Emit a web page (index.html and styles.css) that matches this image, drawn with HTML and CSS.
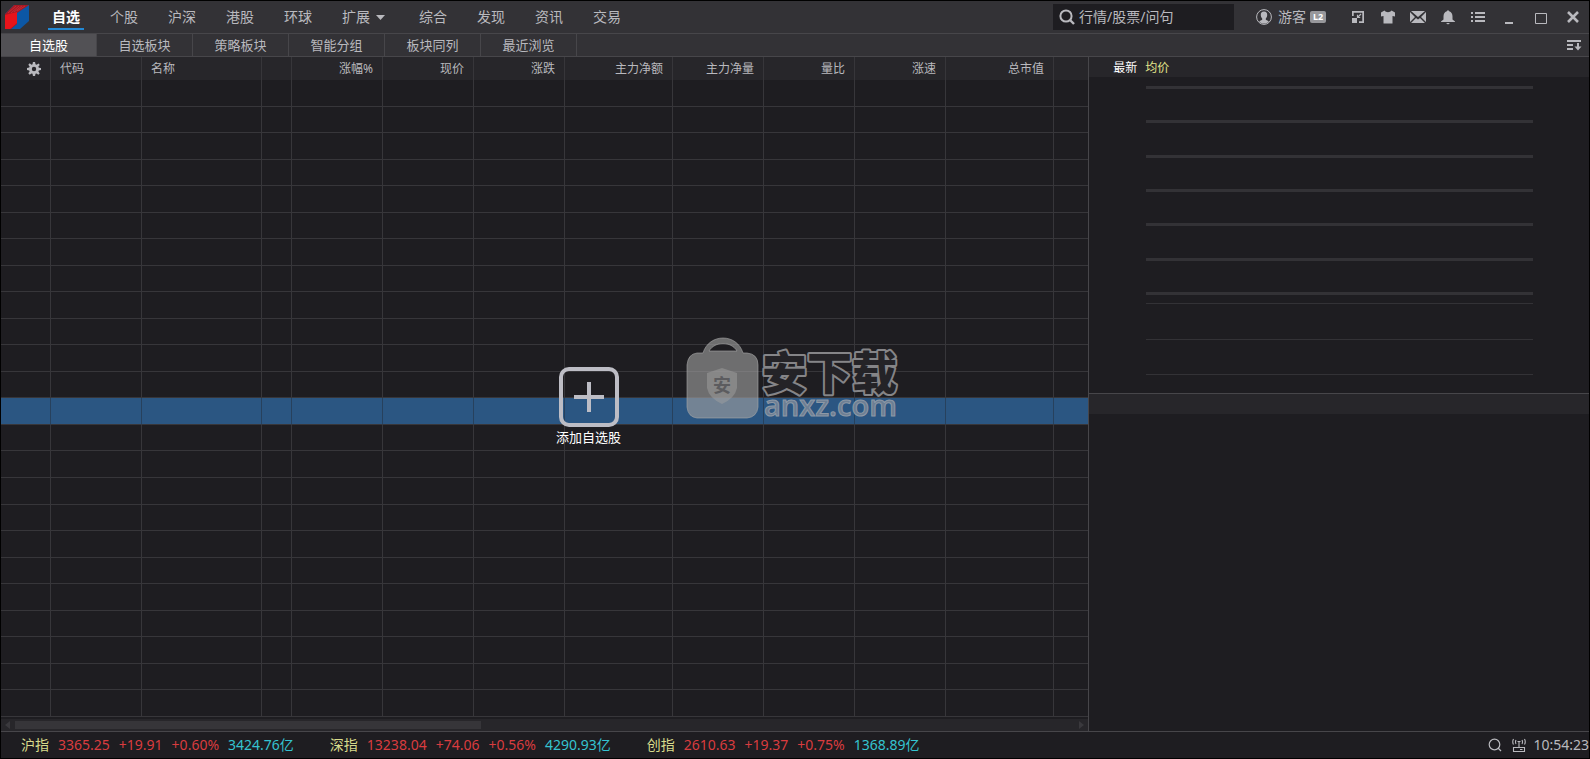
FILE: index.html
```html
<!DOCTYPE html>
<html lang="zh-CN">
<head>
<meta charset="utf-8">
<title>自选股</title>
<link rel="stylesheet" href="styles.css">
</head>
<body>
<div class="app">
  <header class="titlebar">
    <svg class="logo" viewBox="0 0 24 24" aria-hidden="true">
      <path d="M0 9 9 0H24V16L15 24H0Z" fill="#0c57a5"/>
      <path d="M0 9 9 0H24L12 8V19L6 24H0Z" fill="#a81822"/>
      <path d="M0 10 12 7V18L5 24H0Z" fill="#e8131b"/>
      <path d="M3 8 11 1M6 8 14 1M9 7 17 1M12 6 20 1" stroke="#c42b35" stroke-width="1"/>
    </svg>
    <nav class="menu">
      <button class="menu-item active">自选</button>
      <button class="menu-item">个股</button>
      <button class="menu-item">沪深</button>
      <button class="menu-item">港股</button>
      <button class="menu-item">环球</button>
      <button class="menu-item more">扩展<svg class="caret" viewBox="0 0 9 5"><path d="M0 0H9L4.5 5Z"/></svg></button>
      <button class="menu-item">综合</button>
      <button class="menu-item">发现</button>
      <button class="menu-item">资讯</button>
      <button class="menu-item">交易</button>
    </nav>
    <label class="search">
      <svg class="i16 line" viewBox="0 0 16 16"><circle cx="7" cy="7" r="5.6" stroke-width="2"/><path d="M11 11 15 15" stroke-width="2.4"/></svg>
      <input type="text" class="search-input" placeholder="行情/股票/问句" aria-label="行情/股票/问句">
    </label>
    <button class="user">
      <svg class="i16" viewBox="0 0 16 16"><circle cx="8" cy="8" r="7.4" fill="none" stroke="#b9b9be"/><path d="M8 2.500c2.300 0 3.300 1.500 3.200 3.500 0 1.600-.6 2.700-1.400 3.500v1.200l3 1.500C11.500 14 10 14.600 8 14.600S4.500 14 3.200 12.200l3-1.500V9.500C5.400 8.700 4.800 7.600 4.800 6 4.700 4 5.700 2.500 8 2.500Z"/></svg>
      <span>游客</span><span class="badge">L2</span>
    </button>
    <div class="tools">
      <button class="tool" aria-label="缩放"><svg class="i16" viewBox="0 0 16 16"><path d="M2 2H14V14H9V12.300H12.300V3.700H3.700V7H2ZM2 9H7V14H2Z"/><path d="M11 5 7.500 8.500M7.500 5.800V8.500H10.200" fill="none" stroke="#b9b9be" stroke-width="1.200"/></svg></button>
      <button class="tool" aria-label="皮肤"><svg class="i16" viewBox="0 0 16 16"><path d="M1 3.500 4.500 1.500C6 3.800 10 3.800 11.500 1.500L15 3.500V7.500L12.500 7V14.500H3.500V7L1 7.500Z"/></svg></button>
      <button class="tool" aria-label="邮件"><svg class="i16" viewBox="0 0 16 12"><path d="M1 0H15L8 6ZM0 1 5 6 0 11ZM16 1 11 6 16 11ZM1 12 6 7 8 8.500 10 7 15 12Z"/></svg></button>
      <button class="tool" aria-label="提醒"><svg class="i16" viewBox="0 0 16 16"><path d="M8 1 9.200 2.200C11.500 3 12.500 5 12.500 7.500V10.500L15 12.500V13H1V12.500L3.500 10.500V7.500C3.500 5 4.500 3 6.800 2.200ZM6 14H10L8 15.500Z"/></svg></button>
      <button class="tool" aria-label="菜单"><svg class="i16" viewBox="0 0 16 16"><path d="M1 3H3V5H1ZM5 3H15V5H5ZM1 7H3V9H1ZM5 7H15V9H5ZM1 11H3V13H1ZM5 11H15V13H5Z"/></svg></button>
      <button class="tool win" aria-label="最小化"><svg class="i16" viewBox="0 0 16 16"><path d="M4 13H12V15H4Z"/></svg></button>
      <button class="tool win" aria-label="最大化"><svg class="i16 line" viewBox="0 0 16 16"><path d="M2.500 4.500H13.500V14.500H2.500Z" stroke-width="1"/></svg></button>
      <button class="tool win" aria-label="关闭"><svg class="i16 line" viewBox="0 0 16 16"><path d="M3 3 13 13M13 3 3 13" stroke-width="2.600"/></svg></button>
    </div>
  </header>

  <nav class="subtabs">
    <button class="subtab active">自选股</button>
    <button class="subtab">自选板块</button>
    <button class="subtab">策略板块</button>
    <button class="subtab">智能分组</button>
    <button class="subtab">板块同列</button>
    <button class="subtab">最近浏览</button>
    <button class="sort" aria-label="排序"><svg class="i16" viewBox="0 0 16 16"><path d="M1 3H15V5H1ZM1 7H7V9H1ZM1 11H7V13H1ZM11 6H13V9.500H15.500L12 13.500 8.500 9.500H11Z"/></svg></button>
  </nav>

  <main class="main">
    <section class="list">
      <div class="grid-wrap">
        <table class="grid">
          <colgroup><col class="c-set"><col class="c-std"><col class="c-name"><col class="c-flag"><col class="c-std"><col class="c-std"><col class="c-std"><col class="c-wide"><col class="c-std"><col class="c-std"><col class="c-std"><col class="c-wide"><col></colgroup>
          <thead><tr>
            <th class="set"><button class="gear" aria-label="设置"><svg class="i14" viewBox="0 0 16 16"><path d="M6.800 0H9.200L9.700 2.500 11 3.100 13.200 1.700 14.600 3.300 13 5.200 13.500 6.600 16 6.900V9.200L13.500 9.700 13 10.900 14.500 13 12.900 14.500 10.900 13 9.700 13.500 9.200 16H6.800L6.300 13.500 5.100 13 3.100 14.500 1.500 12.900 3 10.900 2.500 9.700 0 9.200V6.800L2.500 6.300 3 5.100 1.500 3.100 3.100 1.500 5.100 3 6.300 2.500ZM8 5.500A2.500 2.500 0 1 0 8 10.500 2.500 2.500 0 1 0 8 5.500Z" fill-rule="evenodd"/></svg></button></th>
            <th class="left">代码</th><th class="left">名称</th><th></th><th>涨幅%</th><th>现价</th><th>涨跌</th><th>主力净额</th><th>主力净量</th><th>量比</th><th>涨速</th><th>总市值</th><th></th>
          </tr></thead>
          <tbody>
            <tr><td><td><td><td><td><td><td><td><td><td><td><td><td>
            <tr><td><td><td><td><td><td><td><td><td><td><td><td><td>
            <tr><td><td><td><td><td><td><td><td><td><td><td><td><td>
            <tr><td><td><td><td><td><td><td><td><td><td><td><td><td>
            <tr><td><td><td><td><td><td><td><td><td><td><td><td><td>
            <tr><td><td><td><td><td><td><td><td><td><td><td><td><td>
            <tr><td><td><td><td><td><td><td><td><td><td><td><td><td>
            <tr><td><td><td><td><td><td><td><td><td><td><td><td><td>
            <tr><td><td><td><td><td><td><td><td><td><td><td><td><td>
            <tr><td><td><td><td><td><td><td><td><td><td><td><td><td>
            <tr><td><td><td><td><td><td><td><td><td><td><td><td><td>
            <tr><td><td><td><td><td><td><td><td><td><td><td><td><td>
            <tr class="selected"><td><td><td><td><td><td><td><td><td><td><td><td><td>
            <tr><td><td><td><td><td><td><td><td><td><td><td><td><td>
            <tr><td><td><td><td><td><td><td><td><td><td><td><td><td>
            <tr><td><td><td><td><td><td><td><td><td><td><td><td><td>
            <tr><td><td><td><td><td><td><td><td><td><td><td><td><td>
            <tr><td><td><td><td><td><td><td><td><td><td><td><td><td>
            <tr><td><td><td><td><td><td><td><td><td><td><td><td><td>
            <tr><td><td><td><td><td><td><td><td><td><td><td><td><td>
            <tr><td><td><td><td><td><td><td><td><td><td><td><td><td>
            <tr><td><td><td><td><td><td><td><td><td><td><td><td><td>
            <tr><td><td><td><td><td><td><td><td><td><td><td><td><td>
            <tr><td><td><td><td><td><td><td><td><td><td><td><td><td>
          </tbody>
        </table>
        <button class="add">
          <svg class="add-icon" viewBox="0 0 60 60"><rect x="2" y="2" width="56" height="56" rx="8" stroke-width="4"/><path d="M15 30H45M30 15V45" stroke-width="4"/></svg>
          <span>添加自选股</span>
        </button>
        <svg class="watermark" viewBox="0 0 230 90">
          <path d="M18 16C24 -4 52 -4 58 16H62Q73 17 73 28V70Q72 80 62 81H12Q3 80 2 70V28Q3 17 12 16ZM24 14H52C46 4 30 4 24 14Z" fill="#a0a0a0" fill-opacity=".62" fill-rule="evenodd" stroke="#a8a8a8" stroke-opacity=".6"/>
          <path d="M37 31 52 36V51Q50 61 37 67 24 61 22 51V36Z" fill="#a0a0a0" fill-opacity=".5"/>
          <text x="37" y="55" class="wm-mini" text-anchor="middle">安</text>
          <text x="77" y="53" class="wm-cn">安下载</text>
          <text x="79" y="79" class="wm-en">anxz.com</text>
        </svg>
      </div>
      <div class="scroll">
        <svg class="arrow" viewBox="0 0 5 8"><path d="M5 0V8L0 4Z"/></svg>
        <div class="track"><div class="thumb"></div></div>
        <svg class="arrow" viewBox="0 0 5 8"><path d="M0 0V8L5 4Z"/></svg>
      </div>
    </section>

    <aside class="side">
      <div class="side-head"><span class="latest">最新</span><span class="avg">均价</span></div>
      <div class="chart">
        <div class="bars"><i></i><i></i><i></i><i></i><i></i><i></i><i></i></div>
        <div class="lines"><i></i><i></i><i></i></div>
      </div>
      <div class="side-bar"></div>
    </aside>
  </main>

  <footer class="status">
    <div class="index"><span class="name">沪指</span><span class="up">3365.25</span><span class="up">+19.91</span><span class="up">+0.60%</span><span class="vol">3424.76亿</span></div>
    <div class="index"><span class="name">深指</span><span class="up">13238.04</span><span class="up">+74.06</span><span class="up">+0.56%</span><span class="vol">4290.93亿</span></div>
    <div class="index"><span class="name">创指</span><span class="up">2610.63</span><span class="up">+19.37</span><span class="up">+0.75%</span><span class="vol">1368.89亿</span></div>
    <div class="status-right">
      <svg class="i14 line" viewBox="0 0 14 14"><circle cx="6.500" cy="6.500" r="5.300" stroke-width="1.200"/><path d="M10 10 13 13" stroke-width="1.200"/></svg>
      <svg class="i14 line" viewBox="0 0 14 14"><path d="M1.500 9.500H12.500V13.500H1.500ZM8 11.500H10.500M7 3V9M5.500 3.500H8.500M4 2Q3 4 4 6M10 2Q11 4 10 6M1.500 1Q0 4 1.500 6.500M12.500 1Q14 4 12.500 6.500" stroke-width="1.100"/></svg>
      <time>10:54:23</time>
    </div>
  </footer>
</div>
</body>
</html>
```

FILE: styles.css
```css
* { box-sizing: border-box; }

body {
  margin: 0;
  background: #1e1d21;
  color: #b9b9be;
  font: 14px/20px "Noto Sans", "Noto Sans CJK SC", sans-serif;
}

button {
  display: flex;
  align-items: center;
  justify-content: center;
  padding: 0;
  border: 0;
  background: none;
  color: inherit;
  font: inherit;
}

svg { display: block; flex: none; fill: #b9b9be; }
.line { fill: none; stroke: #b9b9be; }
.i16 { width: 16px; height: 16px; }
.i14 { width: 14px; height: 14px; }

.app {
  display: flex;
  flex-direction: column;
  height: 100vh;
  border: 1px solid #000;
}

/* Title bar */
.titlebar {
  display: flex;
  align-items: center;
  height: 33px;
  flex: none;
  background: #333236;
  border-bottom: 1px solid #47464a;
}
.logo { width: 24px; height: 24px; margin-left: 4px; }
.menu { display: flex; align-self: stretch; gap: 22px; margin-left: 19px; }
.menu-item {
  min-width: 36px;
  height: 29px;
  padding-top: 5px;
  border-bottom: 2px solid transparent;
}
.menu-item.active { color: #fff; font-weight: bold; border-color: #2288d4; }
.more { min-width: 55px; padding-left: 4px; justify-content: flex-start; gap: 6px; }
.caret { width: 9px; height: 5px; }
.search {
  display: flex;
  align-items: center;
  gap: 4px;
  width: 181px;
  height: 26px;
  margin-left: auto;
  padding: 0 6px;
  background: #1e1d21;
}
.search-input {
  flex: 1;
  min-width: 0;
  padding: 0;
  border: 0;
  background: none;
  color: #b9b9be;
  font: inherit;
}
.search-input::placeholder { color: #b9b9be; opacity: 1; }
.user { gap: 6px; margin-left: 22px; }
.badge {
  width: 16px;
  height: 12px;
  border-radius: 2px;
  background: #97979b;
  color: #fff;
  font-size: 9px;
  font-weight: bold;
  line-height: 12px;
  margin-left: -2px;
}
.tools { display: flex; margin-left: 17px; }
.tool { width: 30px; height: 32px; }
.tool.win { width: 32px; }

/* Second row of tabs */
.subtabs {
  display: flex;
  flex: none;
  height: 23px;
  background: #333236;
  border-bottom: 1px solid #47464a;
  font-size: 13px;
}
.subtab { width: 96px; border-right: 1px solid #47464a; }
.subtab.active { background: #525155; color: #fff; }
.sort { width: 30px; margin-left: auto; }

.main { display: flex; flex: 1; min-height: 0; }

/* Quote table */
.list {
  display: flex;
  flex-direction: column;
  flex: 1088 1 0;
  min-width: 0;
}
.grid-wrap { position: relative; flex: 1; min-height: 0; }
.grid {
  width: 100%;
  height: 100%;
  table-layout: fixed;
  border-collapse: separate;
  border-spacing: 0;
}
.c-set { width: 50px; }
.c-std { width: 91px; }
.c-name { width: 120px; }
.c-flag { width: 30px; }
.c-wide { width: 108px; }
.grid th {
  height: 23px;
  padding: 0 9px;
  background: #27262a;
  border-right: 1px solid #37363a;
  font-size: 12px;
  font-weight: normal;
  line-height: 20px;
  text-align: right;
}
.grid th.left { text-align: left; }
.gear { margin-left: auto; }
.grid td {
  padding: 0;
  border-right: 1px solid #37363a;
  border-bottom: 1px solid #37363a;
}
.grid th:last-child, .grid td:last-child { border-right: 0; }
.grid .selected td { background: #2b5682; border-right-color: #27415d; }

.add {
  position: absolute;
  left: 555px;
  top: 310px;
  flex-direction: column;
  color: #fff;
  font-size: 13px;
}
.add-icon { width: 60px; height: 60px; fill: none; stroke: #bdbdc5; }

.watermark {
  position: absolute;
  left: 684px;
  top: 280px;
  width: 230px;
  height: 90px;
}
.wm-mini { font: bold 18px "Noto Sans CJK SC", sans-serif; fill: #5c5c5f; }
.wm-cn {
  font: 900 45px "Noto Sans CJK SC", sans-serif;
  fill: #242327;
  stroke: #858588;
  stroke-width: 4px;
  stroke-linejoin: round;
  paint-order: stroke;
}
.wm-en {
  font: 600 29px "Open Sans", sans-serif;
  fill: #6d7f94;
  stroke: #8e99a6;
  stroke-width: 1px;
}

.scroll {
  display: flex;
  align-items: center;
  gap: 5px;
  height: 12px;
  flex: none;
  margin-top: 2px;
  padding: 0 4px;
  background: #27262a;
}
.arrow { width: 5px; height: 8px; fill: #3a393d; }
.track { flex: 1; }
.thumb { width: 44%; height: 8px; background: #363539; }

/* Intraday chart */
.side {
  display: flex;
  flex-direction: column;
  flex: 500 1 0;
  min-width: 0;
  border-left: 1px solid #47464a;
}
.side-head {
  display: flex;
  gap: 8px;
  height: 20px;
  padding-left: 24px;
  background: #27262a;
  font-size: 12px;
  line-height: 22px;
}
.latest { color: #fff; }
.avg { color: #e2e58a; }
.chart { padding: 9px 56px 18px 57px; }
.bars, .lines { display: flex; flex-direction: column; justify-content: space-between; }
.bars { height: 209px; }
.bars i { height: 3px; background: #333236; }
.lines { height: 72px; margin-top: 8px; }
.lines i { height: 1px; background: #333236; }
.side-bar { height: 21px; background: #27262a; border-top: 1px solid #47464a; }

/* Status bar */
.status {
  display: flex;
  align-items: center;
  gap: 36px;
  height: 27px;
  flex: none;
  padding-left: 20px;
  border-top: 1px solid #47464a;
  line-height: 22px;
}
.index { display: flex; gap: 9px; }
.name { color: #d9dc8c; }
.up { color: #d93c3f; }
.vol { color: #35c3d0; }
.status-right { display: flex; align-items: center; gap: 10px; margin-left: auto; }
.status-right time { margin-left: -3px; }
```
